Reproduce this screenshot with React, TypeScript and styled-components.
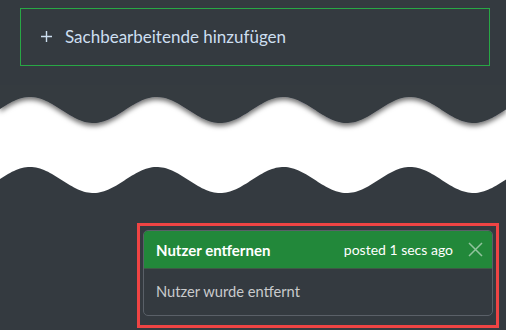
import React from "react";
import styled, { createGlobalStyle } from "styled-components";

const Global = createGlobalStyle`
  html, body { margin: 0; padding: 0; background: #343a40; }
  body { font-family: "Lato", "Open Sans", sans-serif; }
  * { box-sizing: border-box; }
`;

const Page = styled.div`
  width: 506px;
  height: 330px;
  background: #343a40;
  display: flex;
  flex-direction: column;
  overflow: hidden;
`;

const Top = styled.div`
  padding: 8px 0 0 20px;
`;

const AddButton = styled.button`
  width: 470px;
  height: 58px;
  border: 1px solid #28a745;
  background: transparent;
  display: flex;
  align-items: center;
  gap: 13px;
  padding: 0 0 2px 20px;
  color: #cddff0;
  font-family: "Lato", sans-serif;
  font-size: 17px;
  cursor: pointer;
`;

const PlusIcon = styled.svg`
  width: 11px;
  height: 11px;
  display: block;
`;

const WaveWrap = styled.div`
  margin-top: 19px;
  height: 120px;
`;

const ToastZone = styled.div`
  margin-top: 18px;
  display: flex;
  justify-content: flex-end;
  padding-right: 7px;
`;

const Highlight = styled.div`
  width: 362px;
  height: 105px;
  border: 3px solid #ef4444;
  padding: 4px 3px 9px 3px;
`;

const Toast = styled.div`
  width: 350px;
  height: 86px;
  border: 1px solid #5a6068;
  border-radius: 5px;
  overflow: hidden;
  display: flex;
  flex-direction: column;
  background: #343a40;
`;

const ToastHeader = styled.div`
  height: 38px;
  background: #22883a;
  border-bottom: 1px solid #3d5a45;
  display: flex;
  align-items: center;
  padding: 0 9px 0 12px;
  color: #fff;
  font-size: 14px;
`;

const Title = styled.strong`
  font-weight: 700;
  font-size: 15px;
  flex: 1;
`;

const Meta = styled.span`
  font-weight: 400;
  font-size: 14px;
  margin-right: 15px;
`;

const CloseIcon = styled.svg`
  width: 15px;
  height: 15px;
  display: block;
`;

const ToastBody = styled.div`
  flex: 1;
  display: flex;
  align-items: center;
  padding: 0 12px 2px;
  color: #c9cbcd;
  font-size: 14.7px;
`;

function wavePath(offset: number, toY: number, w: number) {
  const pts: string[] = [];
  for (let x = 0; x <= w; x += 2) {
    const y = offset - 13 * Math.cos((2 * Math.PI * (x - 30)) / 126.7);
    pts.push(`${x},${y.toFixed(2)}`);
  }
  return `M0,${toY} L${pts.join(" L")} L${w},${toY} Z`;
}

function Wave() {
  const w = 506;
  const top = wavePath(25, -10, w);
  const bottom = wavePath(95, 130, w);
  return (
    <svg width={w} height={120} viewBox={`0 0 ${w} 120`} style={{ display: "block" }}>
      <defs>
        <filter id="sh" x="-10%" y="-50%" width="120%" height="200%">
          <feDropShadow dx="0" dy="3" stdDeviation="2.5" floodColor="#000" floodOpacity="0.55" />
        </filter>
      </defs>
      <rect x="0" y="0" width={w} height="120" fill="#ffffff" />
      <path d={bottom} fill="#343a40" />
      <path d={top} fill="#343a40" filter="url(#sh)" />
    </svg>
  );
}

export default function App() {
  return (
    <>
      <Global />
      <Page>
        <Top>
          <AddButton>
            <PlusIcon viewBox="0 0 11 11">
              <path d="M5.5 0V11M0 5.5H11" stroke="#cddff0" strokeWidth="1.4" />
            </PlusIcon>
            Sachbearbeitende hinzufügen
          </AddButton>
        </Top>
        <WaveWrap>
          <Wave />
        </WaveWrap>
        <ToastZone>
          <Highlight>
            <Toast>
              <ToastHeader>
                <Title>Nutzer entfernen</Title>
                <Meta>posted 1 secs ago</Meta>
                <CloseIcon viewBox="0 0 15 15">
                  <path d="M1 1L14 14M14 1L1 14" stroke="rgba(255,255,255,0.5)" strokeWidth="1.5" />
                </CloseIcon>
              </ToastHeader>
              <ToastBody>Nutzer wurde entfernt</ToastBody>
            </Toast>
          </Highlight>
        </ToastZone>
      </Page>
    </>
  );
}
